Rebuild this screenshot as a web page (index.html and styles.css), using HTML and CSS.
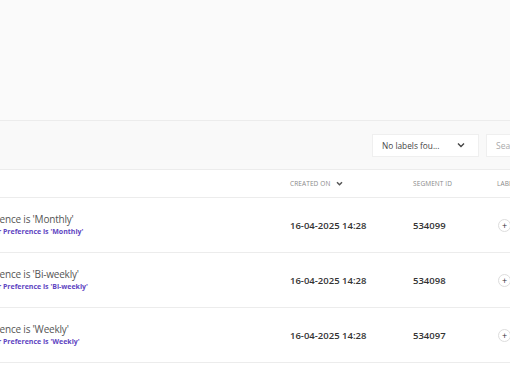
FILE: index.html
```html
<!DOCTYPE html>
<html lang="en">
<head>
    <meta charset="UTF-8">
    <title>Segments</title>
    <link rel="stylesheet" href="styles.css">
</head>
<body>
    <div class="view">
        <div class="top-area"></div>

        <div class="toolbar">
            <div class="label-select">
                <span>No labels fou...</span>
                <svg class="chev" width="8" height="6" viewBox="0 0 8 6"><path d="M1 1.5 L4 4.5 L7 1.5" fill="none" stroke="#444" stroke-width="1.4"/></svg>
            </div>
            <div class="search-box">Search segments</div>
        </div>

        <div class="table">
            <div class="row head">
                <div class="cell name">SEGMENT NAME</div>
                <div class="cell created">CREATED ON
                    <svg class="chev" width="7" height="5" viewBox="0 0 8 6"><path d="M1 1.5 L4 4.5 L7 1.5" fill="none" stroke="#555" stroke-width="1.8"/></svg>
                </div>
                <div class="cell">SEGMENT ID</div>
                <div class="cell">LABELS</div>
            </div>

            <div class="row">
                <div class="cell name">
                    <div class="title">Communication Preference is 'Monthly'</div>
                    <div class="sub">Marketing Email Newsletter Preference is 'Monthly'</div>
                </div>
                <div class="cell created val">16-04-2025 14:28</div>
                <div class="cell val">534099</div>
                <div class="cell"><span class="add">+</span></div>
            </div>

            <div class="row">
                <div class="cell name">
                    <div class="title">Communication Preference is 'Bi-weekly'</div>
                    <div class="sub">Marketing Email Newsletter Preference is 'Bi-weekly'</div>
                </div>
                <div class="cell created val">16-04-2025 14:28</div>
                <div class="cell val">534098</div>
                <div class="cell"><span class="add">+</span></div>
            </div>

            <div class="row">
                <div class="cell name">
                    <div class="title">Communication Preference is 'Weekly'</div>
                    <div class="sub">Marketing Email Newsletter Preference is 'Weekly'</div>
                </div>
                <div class="cell created val">16-04-2025 14:28</div>
                <div class="cell val">534097</div>
                <div class="cell"><span class="add">+</span></div>
            </div>
        </div>
    </div>
</body>
</html>
```

FILE: styles.css
```css
:root {
    --bg: #fafafa;
    --line: #ececec;
    --text: #555;
    --dark: #333;
    --muted: #8a8a8a;
    --purple: #5e45c2;
}

* { box-sizing: border-box; margin: 0; padding: 0; }

body {
    font-family: 'Open Sans', 'Noto Sans', sans-serif;
    background: #fff;
    color: var(--text);
    width: 510px;
    height: 369px;
    overflow: hidden;
}

.view {
    width: 510px;
    overflow: hidden;
}

.top-area {
    height: 121px;
    background: var(--bg);
    border-bottom: 1px solid var(--line);
}

.toolbar {
    height: 49px;
    background: #f9f9f9;
    border-bottom: 1px solid var(--line);
    display: flex;
    align-items: center;
    gap: 7px;
    padding-left: 372px;
    white-space: nowrap;
}

.label-select {
    flex: none;
    width: 107px;
    height: 23px;
    background: #fff;
    border: 1px solid #efefef;
    display: flex;
    align-items: center;
    justify-content: space-between;
    padding: 0 13px 0 9px;
    font-size: 8.3px;
    color: #444;
}

.search-box {
    flex: none;
    width: 140px;
    height: 23px;
    background: #fff;
    border: 1px solid #efefef;
    display: flex;
    align-items: center;
    padding-left: 9px;
    font-size: 8.5px;
    color: #aaa;
}

.table {
    margin-left: -97px;
    width: 800px;
}

.row {
    display: grid;
    grid-template-columns: 387px 123px 84px 1fr;
    height: 55px;
    align-items: center;
    border-bottom: 1px solid var(--line);
}

.row.head {
    height: 28px;
    font-size: 6.5px;
    color: var(--muted);
    letter-spacing: 0.1px;
}

.cell {
    white-space: nowrap;
    display: flex;
    align-items: center;
    gap: 6px;
}

.cell.name {
    display: block;
}

.head .cell.name { visibility: hidden; }

.title {
    font-size: 10px;
    letter-spacing: -0.2px;
    color: var(--text);
    line-height: 13px;
    text-indent: -5px;
}

.sub {
    font-size: 7px;
    font-weight: 700;
    color: var(--purple);
    line-height: 11px;
}

.val {
    font-size: 9.5px;
    font-weight: 600;
    color: var(--dark);
}

.add {
    width: 13px;
    height: 13px;
    border: 1px solid #ddd;
    border-radius: 50%;
    display: flex;
    align-items: center;
    justify-content: center;
    font-size: 9px;
    color: #333;
    line-height: 1;
    margin-left: 1px;
}
```
